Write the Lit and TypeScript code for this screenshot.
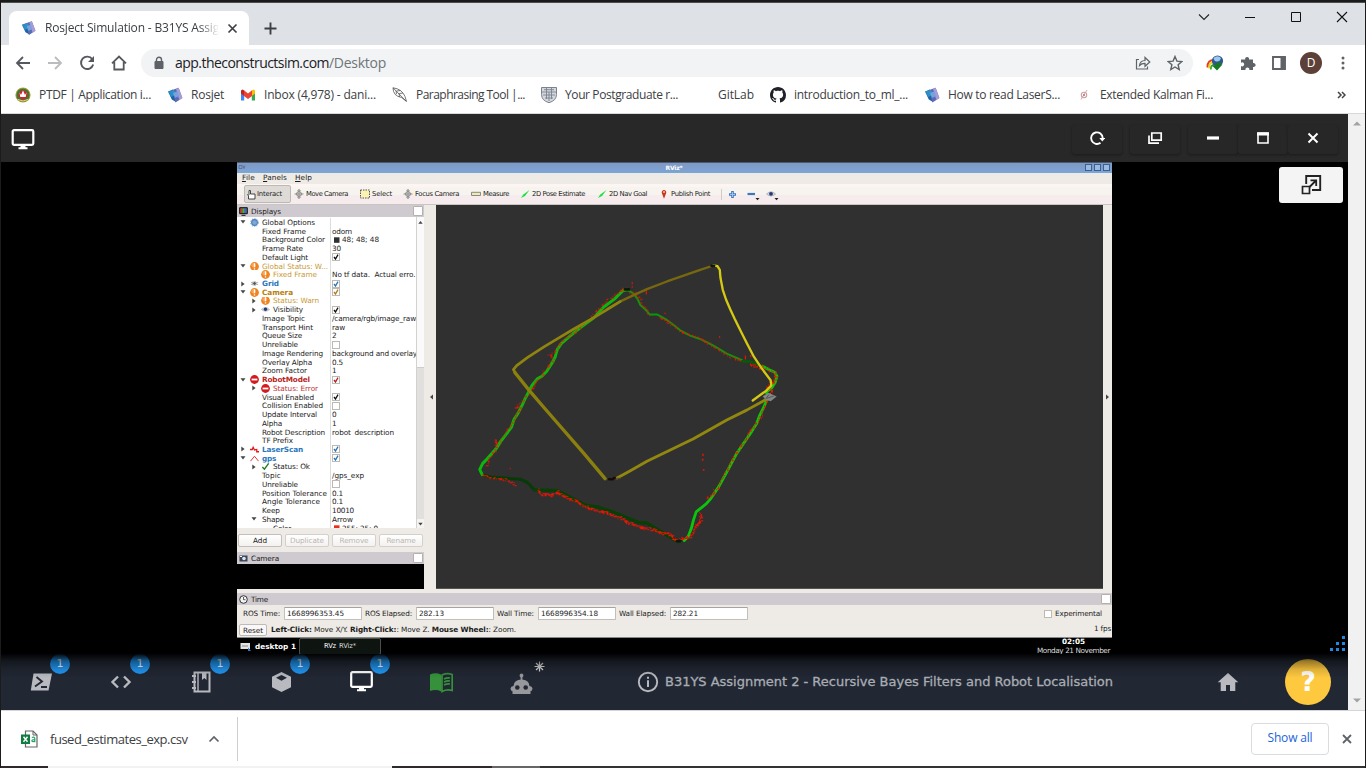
import { LitElement, html, svg, css, nothing } from "lit";
import { customElement } from "lit/decorators.js";

const icon = (w: number, h: number, body: unknown, vb = `0 0 ${w} ${h}`) =>
  html`<svg class="ic" width=${w} height=${h} viewBox=${vb} fill="none">${body}</svg>`;

// Label whose tracking is adjusted so that it spans w pixels.
const t = (text: string, w: number, cls = "") =>
  html`<span class="fit ${cls}" data-w=${w}>${text}</span>`;

const gem = svg`
  <path d="M1 4.5 6 2.6 9 15 4.8 12.6z" fill="#1b62a8"/>
  <path d="M5.2 3 11.6.8 15.4 11 8.4 15.4z" fill="#5b6bb5"/>
  <path d="M1.6 4.6 7 3 9 8 4 10z" fill="#2f9bd0" opacity=".8"/>
  <path d="M9 2 11.6.8 15.4 11 12.4 13z" fill="#a79bd8"/>
  <path d="M6 6 10.5 4.4 12 9.2 8 10.8z" fill="#77a3dd"/>`;

const monitor = svg`
  <path d="M2.5 1.2h18a1.3 1.3 0 0 1 1.3 1.3v12a1.3 1.3 0 0 1-1.3 1.3h-18a1.3 1.3 0 0 1-1.3-1.3v-12a1.3 1.3 0 0 1 1.3-1.3z" stroke="#fff" stroke-width="2.2"/>
  <path d="M9 16h5v2.2h2v2H7v-2h2z" fill="#fff"/>`;

const bookmarks: { text: string; w: number; art: unknown }[] = [
  { text: "PTDF | Application i...", w: 112, art: svg`<circle cx="8" cy="8" r="7.6" fill="#b79a32"/><circle cx="8" cy="8" r="6.6" fill="#3a7a3c"/><circle cx="8" cy="8" r="4.4" fill="#d8212b"/><path d="M4.500 5.500 6 8l2-4.500 2 4.500 1.500-2.500-.8 4.500H5.300z" fill="#fff"/><path d="M3 12.500q5 3 10 0" stroke="#e8d98a"/>` },
  { text: "Rosjet", w: 33, art: gem },
  { text: "Inbox (4,978) - dani...", w: 112, art: svg`<path d="M1 4v9.500h3.200V6z" fill="#4285f4"/><path d="M11.800 6v7.500H15V4z" fill="#34a853"/><path d="M11.800 3.500 13.500 2.500 15 3.500v3l-3.200 2.500z" fill="#fbbc04"/><path d="M1 3.500 2.500 2.500 4.200 3.500V9L1 6.500z" fill="#c5221f"/><path d="M4 3.300 8 6.600l4-3.300V9L8 12 4 9z" fill="#ea4335"/>` },
  { text: "Paraphrasing Tool |...", w: 109, art: svg`<path d="M1 .8Q10 2 13 9.500l1.500 5M1 .8Q1 9 9.500 10.500l5 4M1 .8 14 14M4 3.500 4.500 7M7 6l.5 4M7.500 6.500 11 6M5 4l3.500-.5" stroke="#555" stroke-width=".8"/>` },
  { text: "Your Postgraduate r...", w: 113, art: svg`<path d="M.5.500h15v7q0 6-7.500 8.200Q.500 13.500.500 7.500z" fill="#d4d7dc" stroke="#7b8290"/><path d="M1 5h14M3 2.700h10M5.500 1v11M10.500 1v11M2 8h12M4 11h8M8 5v9" stroke="#7b8290" stroke-width=".9"/>` },
  { text: "GitLab", w: 36, art: nothing },
  { text: "introduction_to_ml_...", w: 114, art: svg`<path fill="#1f2328" d="M8 0C3.580 0 0 3.580 0 8c0 3.540 2.290 6.530 5.470 7.590.4.070.55-.17.55-.38 0-.19-.01-.82-.01-1.490-2.010.37-2.530-.49-2.690-.94-.09-.23-.48-.94-.82-1.130-.28-.15-.68-.52-.01-.53.63-.01 1.080.58 1.230.82.72 1.210 1.870.87 2.330.66.07-.52.28-.87.51-1.070-1.780-.2-3.640-.89-3.640-3.950 0-.87.31-1.590.82-2.150-.08-.2-.36-1.020.08-2.120 0 0 .67-.21 2.200.82.64-.18 1.320-.27 2-.27s1.360.09 2 .27c1.530-1.040 2.200-.82 2.200-.82.44 1.100.16 1.920.08 2.120.51.56.82 1.270.82 2.150 0 3.070-1.870 3.750-3.650 3.950.29.25.54.73.54 1.480 0 1.070-.01 1.930-.01 2.200 0 .21.15.46.55.38A8.010 8.010 0 0 0 16 8c0-4.420-3.580-8-8-8z"/>` },
  { text: "How to read LaserS...", w: 112, art: gem },
  { text: "Extended Kalman Fi...", w: 113, art: svg`<path d="M5 12.500 11 3" stroke="#d88" stroke-width=".8"/><circle cx="8" cy="8" r="2.700" stroke="#c5a3a8" stroke-width="1.100"/><circle cx="8" cy="8" r="1" fill="#c66"/>` },
];

const orange = svg`<circle cx="5" cy="5" r="4.900" fill="#ee8420"/><circle cx="4" cy="3.500" r="2.500" fill="#f8a45a"/><path d="M5 1.500v4.300M5 7v1.300" stroke="#fff" stroke-width="1.500"/>`;
const stop = svg`<circle cx="5" cy="5" r="4.900" fill="#d41a1f"/><path d="M1.800 5h6.400" stroke="#fff" stroke-width="2"/>`;
const eye = svg`<path d="M.5 5Q5 .5 9.500 5 5 9 .5 5z" fill="#d5d8e2" stroke="#888" stroke-width=".5"/><circle cx="5" cy="4.800" r="1.900" fill="#243a78"/>`;
const gear = svg`<circle cx="5" cy="5" r="3.200" fill="#7fa6d4" stroke="#4a80bc" stroke-width="1.200" /><circle cx="5" cy="5" r="4.300" stroke="#6a97c9" stroke-dasharray="1.400 1.400" stroke-width="1"/>`;
const grid = svg`<path d="M1 4h8M1 6h8M3.500 2.500v5M6 2.500v5" stroke="#999" stroke-width=".8"/><path d="M3 5h4M5 3v4" stroke="#555"/>`;
const laser = svg`<path d="M0 5h2.500L3.500 2.500 5 5.500 7.500 5v2.500H10" stroke="#e01818" stroke-width="1.400"/>`;
const pathIcon = svg`<path d="M.5 8 5 2.500 9.500 8" stroke="#d22" stroke-width="1"/>`;
const okIcon = svg`<path d="M1.500 5.500 3.800 8 8.500 1.500" stroke="#1c7d22" stroke-width="1.500"/>`;

type Row = { d: number; n: string; w: number; a?: "v" | ">"; i?: unknown; c?: string; v?: string; vw?: number; k?: string; sw?: string };
// d: indent of the label, k: checkbox tick colour ("" = unticked)
const rows: Row[] = [
  { d: 0, a: "v", i: gear, n: "Global Options", w: 53 },
  { d: 0, n: "Fixed Frame", w: 44, v: "odom", vw: 20 },
  { d: 0, n: "Background Color", w: 63, v: "48; 48; 48", vw: 37, sw: "#303030" },
  { d: 0, n: "Frame Rate", w: 41, v: "30", vw: 9 },
  { d: 0, n: "Default Light", w: 46, k: "#111" },
  { d: 0, a: "v", i: orange, c: "warn", n: "Global Status: W...", w: 66 },
  { d: 1, i: orange, c: "warn", n: "Fixed Frame", w: 44, v: "No tf data.  Actual erro.", vw: 83.5 },
  { d: 0, a: ">", i: grid, c: "link", n: "Grid", w: 17, k: "#2a72b5" },
  { d: 0, a: "v", i: orange, c: "warnb", n: "Camera", w: 31, k: "#b07a12" },
  { d: 1, a: ">", i: orange, c: "warn", n: "Status: Warn", w: 46 },
  { d: 1, a: ">", i: eye, n: "Visibility", w: 30, k: "#111" },
  { d: 0, n: "Image Topic", w: 43, v: "/camera/rgb/image_raw", vw: 84 },
  { d: 0, n: "Transport Hint", w: 51, v: "raw", vw: 13 },
  { d: 0, n: "Queue Size", w: 40, v: "2", vw: 4.5 },
  { d: 0, n: "Unreliable", w: 36, k: "" },
  { d: 0, n: "Image Rendering", w: 61, v: "background and overlay", vw: 85 },
  { d: 0, n: "Overlay Alpha", w: 50, v: "0.5", vw: 11 },
  { d: 0, n: "Zoom Factor", w: 45, v: "1", vw: 4.5 },
  { d: 0, a: "v", i: stop, c: "err", n: "RobotModel", w: 48, k: "#b41d22" },
  { d: 1, a: ">", i: stop, c: "errn", n: "Status: Error", w: 45 },
  { d: 0, n: "Visual Enabled", w: 52, k: "#111" },
  { d: 0, n: "Collision Enabled", w: 61, k: "" },
  { d: 0, n: "Update Interval", w: 55, v: "0", vw: 4.5 },
  { d: 0, n: "Alpha", w: 20, v: "1", vw: 4.5 },
  { d: 0, n: "Robot Description", w: 63, v: "robot_description", vw: 62 },
  { d: 0, n: "TF Prefix", w: 31 },
  { d: 0, a: ">", i: laser, c: "link", n: "LaserScan", w: 41, k: "#2a72b5" },
  { d: 0, a: "v", i: pathIcon, c: "link", n: "gps", w: 14, k: "#2a72b5" },
  { d: 1, a: ">", i: okIcon, n: "Status: Ok", w: 37 },
  { d: 0, n: "Topic", w: 19, v: "/gps_exp", vw: 32 },
  { d: 0, n: "Unreliable", w: 36, k: "" },
  { d: 0, n: "Position Tolerance", w: 65, v: "0.1", vw: 11 },
  { d: 0, n: "Angle Tolerance", w: 58, v: "0.1", vw: 11 },
  { d: 0, n: "Keep", w: 18, v: "10010", vw: 22 },
  { d: 0, a: "v", n: "Shape", w: 22, v: "Arrow", vw: 21 },
  { d: 1, n: "Color", w: 18, v: "255; 25; 0", vw: 36, sw: "#e8301a" },
];

const cross = svg`<path d="M5 .5v9M.5 5h9M5 .5 3.500 2M5 .5 6.500 2M5 9.500 3.500 8M5 9.500 6.500 8" stroke="#8a8a86" stroke-width="1"/><circle cx="5" cy="5" r="2.400" stroke="#777" stroke-width=".9"/>`;
const arrow = svg`<path d="M1 9 3 5.800 9.500 1 5 7z" fill="#20e040"/>`;
const tools: { lead: number; art: unknown; n: string; w: number }[] = [
  { lead: 3, art: cross, n: "Move Camera", w: 42 },
  { lead: 12, art: svg`<path d="M.5 1h9v8h-9z" fill="#fbf3b4" stroke="#555" stroke-dasharray="1.500 1"/>`, n: "Select", w: 20 },
  { lead: 11, art: cross, n: "Focus Camera", w: 44 },
  { lead: 12, art: svg`<path d="M.5 3.300h9v3.200h-9z" fill="#f0ebb0" stroke="#888"/>`, n: "Measure", w: 26 },
  { lead: 11, art: arrow, n: "2D Pose Estimate", w: 53 },
  { lead: 12, art: arrow, n: "2D Nav Goal", w: 38 },
  { lead: 12, art: svg`<path d="M5 9.800 2.800 4a2.300 2.300 0 1 1 4.400 0z" fill="#c4391e"/><circle cx="5" cy="3" r="1" fill="#f4c0a8"/>`, n: "Publish Point", w: 39 },
];

type P = [number, number];
// Deterministic scatter of small squares along a polyline.
function scatter(pts: P[], seed: number, spread: number, step: number) {
  let s = seed * 7919;
  const rnd = () => ((s = (s * 16807) % 2147483647) / 2147483647);
  let d = "";
  for (let i = 1; i < pts.length; i++) {
    const [ax, ay] = pts[i - 1], [bx, by] = pts[i];
    const n = Math.max(1, Math.round(Math.hypot(bx - ax, by - ay) / step));
    for (let j = 0; j < n; j++) {
      const k = j / n;
      const x = Math.round((ax + (bx - ax) * k + (rnd() - 0.5) * spread) / 3) * 3;
      const y = Math.round((ay + (by - ay) * k + (rnd() - 0.5) * spread) / 3) * 3;
      d += `M${x} ${y}h${rnd() > 0.7 ? 6 : 3}v3H${x}z`;
    }
  }
  return d;
}
const red = [
  scatter([[72, 652], [84, 630], [104, 600], [104, 568], [108, 590], [126, 560], [150, 525], [178, 474], [162, 472], [185, 458], [205, 425], [240, 378], [280, 325], [264, 316], [284, 306], [298, 278], [350, 238], [400, 192], [440, 148], [490, 116]], 31, 7, 4.5),
  scatter([[480, 116], [500, 118], [514, 134], [524, 130], [548, 164], [552, 176], [572, 198]], 57, 9, 4),
  scatter([[596, 200], [640, 228], [660, 244], [690, 256], [724, 268], [760, 290], [800, 316], [845, 334]], 77, 6, 4),
  scatter([[866, 345], [900, 352], [924, 358], [942, 368], [944, 392], [922, 406], [920, 414], [932, 416], [926, 444]], 93, 10, 2.2),
  scatter([[922, 448], [905, 484], [895, 515], [875, 535], [860, 565], [830, 606], [800, 660], [770, 716], [742, 748]], 12, 7, 3.5),
  scatter([[720, 790], [720, 816], [704, 832], [692, 860], [664, 868], [650, 874], [630, 856], [600, 848], [574, 838], [545, 836], [520, 826], [500, 818], [470, 802], [440, 790], [410, 784], [385, 776], [350, 758], [316, 742], [290, 728], [270, 738], [240, 734], [232, 716]], 43, 8, 1.6),
  scatter([[64, 676], [100, 686], [140, 692], [154, 700], [166, 714]], 8, 7, 3.2),
].join("");

const scene = svg`
  <g transform="translate(460 250) scale(.33333)" stroke-linecap="round" stroke-linejoin="round">
    <path d="M62 676 90 683 150 688 180 690 200 699 222 722" stroke="#063a06" stroke-width="9"/>
    <path d="M222 722 290 724 375 768 410 773 460 789 535 820 560 822 590 840 640 870 655 877" stroke="#083f06" stroke-width="10"/>
    <path d="M64 676 57 660 66 642 78 630 108 596 120 576 134 558 152 534 160 510 172 492 186 464 194 446 205 426 214 408 230 388 244 380 258 366 276 338 284 322 290 300 302 282 330 258 362 232 400 204 430 172 462 148 488 122 500 120" stroke="#0db60d" stroke-width="9"/>
    <path d="M500 120 518 130 532 148 540 166 556 180 568 194 590 194 616 208 640 226 660 242 690 258 724 270 760 288 800 312 846 332" stroke="#0a970a" stroke-width="6"/>
    <path d="M846 335 870 336 912 352" stroke="#075a09" stroke-width="8"/>
    <path d="M908 350 926 360 944 368 951 380 946 398 936 414 918 428 926 440 908 480 898 500 890 522 870 554 830 612 800 668 776 712 752 748 738 764 708 788 700 812 694 836 684 862 672 874" stroke="#0cc40c" stroke-width="8.500"/>
    <path d=${red} fill="#ee1500"/>
    <path d="M726 613h5v6h-5zM725 628h5v6h-5zM728 659h5v5h-5zM777 259h3v6h-3zM612 189h5v3h-5zM556 122h4v12h-4zM147 655h3v5h-3zM514 96h3v8h-3zM514 108h3v6h-3zM854 318h4v12h-4zM870 316h4v6h-4zM740 742h5v8h-5z" fill="#e01400"/>
    <path d="M760 47 720 60 620 95 560 118 520 136 480 155 440 178" stroke="#77680f" stroke-width="7"/>
    <path d="M480 155 440 180 400 204 340 238 290 268 250 292 200 324 168 348 158 360 168 376" stroke="#8f840f" stroke-width="8"/>
    <path d="M162 368 207 424 250 474 290 520 370 612 434 688" stroke="#8b800e" stroke-width="10"/>
    <path d="M470 686 510 664 560 636 630 602 700 568 800 512 860 482 918 450" stroke="#93880f" stroke-width="8.500"/>
    <path d="M760 47 772 49 779 60 781 84 788 120 798 150 810 178 824 208 840 240 860 280 882 322 904 355 932 392 934 408 918 424 878 453" stroke="#d5c914" stroke-width="7"/>
    <path d="M446 690h12M460 686h3" stroke="#160c08" stroke-width="7"/>
    <path d="M468 687h12" stroke="#5b4030" stroke-width="3"/>
    <path d="M494 119h12M650 876h10M754 48h8" stroke="#0c1a0a" stroke-width="8"/>
    <path d="M908 440 926 430 950 441 932 455 916 450z" fill="#858585"/>
    <path d="M922 446 940 440M926 436 918 448" stroke="#4f5a4f" stroke-width="3"/>
  </g>`;

const navIcons = [
  svg`<path d="M3.500 3.500H22L18.500 20.500H0.800z" fill="#b8babf"/><path d="m6.500 7 5.500 4.500-7 5M11 17h6" stroke="#212733" stroke-width="1.900"/>`,
  svg`<path d="M8 6.500 2.500 12 8 17.500M14 6.500 19.500 12 14 17.500" stroke="#b8babf" stroke-width="2.400"/>`,
  svg`<path d="M4.500 2.500h15v19h-15z" stroke="#b8babf" stroke-width="2" /><path d="M2 6h4M2 12h4M2 18h4" stroke="#b8babf" stroke-width="2.200"/><path d="M8 2.500v19" stroke="#b8babf" stroke-width="1.400"/><path d="M12 3h4.500v7l-2.200-2-2.300 2z" fill="#b8babf"/>`,
  svg`<path d="m11.500 2 9.500 4.800v10.400L11.500 22 2 17.200V6.800z" fill="#b8babf"/><path d="m11.500 5 5.500 2.800-5.500 3L6 7.800z" fill="#212733"/>`,
  svg`<g transform="translate(0 1)">${monitor}</g>`,
  svg`<path d="M0 4.500Q6 2 11.300 4.800V21.500Q6 19 0 21z" fill="#35913a"/><path d="M12 5Q17 2.500 22.200 4.500V20.500Q17 19 12 21.500zM14 9q3-1.500 6-1M14 12q3-1.500 6-1M14 15q3-1.500 6-1" stroke="#35913a" stroke-width="1.700"/>`,
  svg`<circle cx="11.500" cy="5.500" r="1.900" fill="#97989c"/><path d="M11.500 5v6" stroke="#97989c" stroke-width="1.800"/><path d="M3.500 16Q4 9.500 11.500 9.500T19.500 16q2.700 0 3 2.500-.2 2.500-2 2.700V24h-18v-2.800Q.700 21 .500 18.500.800 16 3.500 16z" fill="#97989c"/><circle cx="7.300" cy="17.500" r="2.300" fill="#212733"/><circle cx="15.700" cy="17.500" r="2.300" fill="#212733"/>`,
];

@customElement("app-root")
export class AppRoot extends LitElement {
  static styles = css`
    * { box-sizing: border-box; }
    :host { display: block; width: 1366px; height: 768px; overflow: hidden; font: 12px/16px "Open Sans", "Noto Sans", sans-serif; color: #3c4043; }
    .win { width: 1366px; height: 768px; background: #1b1b1b; padding: 2px 1px 0 1px; display: flex; flex-direction: column; border-top: 0; }
    .ic { display: block; flex: none; }
    .fit { display: inline-block; white-space: pre; flex: none; }
    .grow { flex: 1; }

    .tabs { height: 43px; flex: none; background: #dee1e6; border-top: 1px solid #4c4e50; display: flex; align-items: flex-start; }
    .tab { margin: 8px 0 0 8px; height: 34px; width: 240px; background: #fff; border-radius: 8px 8px 0 0; display: flex; align-items: center; padding: 0 0 0 12px; gap: 8px; }
    .tab .title { width: 174px; margin-left: 1px; overflow: hidden; display: flex; -webkit-mask-image: linear-gradient(90deg, #000 154px, transparent 174px); mask-image: linear-gradient(90deg, #000 154px, transparent 174px); }
    .plus { margin: 19px 0 0 15px; }
    .caps { display: flex; margin: 8px 16px 0 0; gap: 32px; }

    .bar { height: 36px; flex: none; background: #fff; display: flex; align-items: center; }
    .nav { display: flex; gap: 16px; margin-left: 14px; }
    .omni { margin-left: 14px; width: 1052px; height: 28px; border-radius: 14px; background: #f1f3f4; display: flex; align-items: center; padding: 0 10px 0 13px; font-size: 14px; }
    .omni .url { margin-left: 11px; color: #202124; display: flex; }
    .omni .path { color: #70757a; }
    .ext { display: flex; align-items: center; margin-left: 13px; }
    .avatar { width: 22px; height: 22px; border-radius: 50%; background: #5d4037; color: #fff; text-align: center; line-height: 22px; margin: 0 19px 0 14px; }
    .marks { height: 33px; flex: none; background: #fff; border-bottom: 1px solid #d6d8da; display: flex; align-items: center; padding: 0 19px 4px 14px; gap: 16px; }
    .mark { display: flex; gap: 8px; align-items: center; }

    .content { height: 596px; flex: none; display: flex; background: #000; }
    .page { width: 1347px; display: flex; flex-direction: column; }
    .scroll { width: 17px; background: #f1f1f1; display: flex; flex-direction: column; justify-content: space-between; align-items: center; padding: 7px 0 7px; }
    .head { height: 48px; flex: none; background: #282828; display: flex; align-items: center; padding: 2px 10px 0 10px; }
    .hb { width: 50px; height: 29px; border-radius: 3px; background: #272727; box-shadow: 0 1px 3px rgba(0,0,0,.35); display: flex; align-items: center; justify-content: center; padding-bottom: 2px; }
    .hb.sp { margin-right: 8px; }
    .desk { height: 492px; flex: none; display: flex; background: #000; padding-left: 236px; }
    .side { flex: 1; display: flex; flex-direction: column; justify-content: space-between; align-items: flex-end; padding: 5px 2px 2px 0; }
    .pop { width: 64px; height: 36px; border-radius: 3px; background: #f4f4f4; display: flex; align-items: center; justify-content: center; margin-right: 3px; }

    .rviz { width: 875px; height: 492px; display: flex; flex-direction: column; background: #eeebe6; font: 7.3px/9px "DejaVu Sans", sans-serif; color: #1c1c1c; }
    .tt { height: 10.500px; flex: none; border-top: 1px solid #4a5a70; background: linear-gradient(#8098c4, #7ba6d6); display: flex; align-items: center; color: #fff; font-weight: bold; }
    .tt .name { margin: 0 auto; padding-left: 16px; font-size: 6px; line-height: 8px; display: flex; }
    .tb { display: flex; gap: 2px; padding-right: 2px; }
    .tb i { width: 7px; height: 7px; border: 1px solid #3c5f96; background: #9db9de; }
    .menu { height: 11.500px; flex: none; display: flex; gap: 8px; padding: 0 5px 2px; align-items: center; }
    u { text-decoration: underline; }
    .tools { height: 21px; flex: none; background: linear-gradient(#fcf5f4 0 15%, #f7f4ef 15% 55%, #f6ecee 55%); border-bottom: 1px solid #c9c6c2; display: flex; align-items: center; padding-left: 3px; font-size: 6.800px; }
    .act { margin-left: 4px; width: 47px; height: 18px; background: #dedbd7; border: 1px solid #bcb9b5; border-radius: 2px; display: flex; align-items: center; gap: 1px; padding-left: 1px; }
    .tool { display: flex; gap: 2px; align-items: center; }
    .vsep { width: 1px; height: 11px; background: #cfccc8; margin: 0 6px 0 11px; }
    .mid { height: 384px; flex: none; display: flex; }
    .left { width: 187px; display: flex; flex-direction: column; }
    .dt { height: 12px; flex: none; background: #cecacf; display: flex; align-items: center; padding: 0 1px 0 2px; gap: 3px; }
    .dt .box { width: 10px; height: 10px; background: #fff; border: 1px solid #b5b0b0; border-radius: 1px; }
    .tree { height: 311px; flex: none; background: #fff; display: flex; }
    .list { width: 179px; height: 311px; padding-top: 1px; overflow: hidden; display: flex; flex-direction: column; }
    .r { height: 8.745px; flex: none; display: flex; }
    .r .l { width: 94px; flex: none; border-right: 1px solid #dcdcdc; display: flex; align-items: center; overflow: hidden; }
    .r .v { flex: 1; overflow: hidden; padding-left: 1px; display: flex; align-items: center; }
    .ar { width: 11px; flex: none; display: flex; justify-content: center; }
    .in { width: 11px; flex: none; }
    .ici { width: 14px; flex: none; display: flex; justify-content: center; padding-right: 2px; }
    .warn { color: #c99a38; } .warnb { color: #b9800f; font-weight: bold; }
    .link { color: #2a78bd; font-weight: bold; } .err { color: #b91f24; font-weight: bold; } .errn { color: #c2353a; }
    .ck { width: 8px; height: 8px; border: 1px solid #bdb9b5; background: #fff; display: flex; align-items: center; justify-content: center; }
    .vs { width: 8px; height: 311px; background: #e2e0de; display: flex; flex-direction: column; justify-content: space-between; border-left: 1px solid #d4d1ce; }
    .vs .kn { height: 151px; background: #fafafa; border-bottom: 1px solid #ccc; display: flex; justify-content: center; padding-top: 3px; }
    .vs .dn { height: 9px; background: #f5f4f2; display: flex; justify-content: center; align-items: center; }
    .btns { height: 24px; flex: none; display: flex; gap: 3px; align-items: center; padding-left: 1px; }
    .b { width: 44px; height: 13px; border: 1px solid #c4bfba; border-radius: 2px; background: linear-gradient(#fff, #f4f1f0); display: flex; align-items: center; justify-content: center; }
    .b.off { color: #b9b6b2; border-color: #d4d0cc; }
    .cv { flex: 1; background: #000; }
    .split { width: 12px; display: flex; align-items: center; justify-content: center; padding-left: 2px; }
    .split.r2 { width: 9px; padding-left: 0; }
    .view { width: 667px; background: #303030; border-bottom: 1px solid #555; }
    .dt.time { margin-top: 4px; height: 12px; }
    .tm { height: 18px; flex: none; display: flex; align-items: center; padding: 0 10px 1px 6px; }
    .f { width: 78px; height: 12.500px; background: #fff; border: 1px solid #c2beba; border-top-color: #a8a4a0; border-radius: 1px; padding-left: 2px; display: flex; align-items: center; margin: 0 3px 0 4px; }
    .st { height: 14px; flex: none; display: flex; align-items: center; padding: 0 1px 1px 2px; }
    .rs { width: 28px; height: 12px; border: 1px solid #bbb; border-radius: 2px; background: #faf7f6; display: flex; align-items: center; justify-content: center; margin-right: 4px; margin-top: 1px; }
    .fps { padding-bottom: 3px; }
    .task { flex: 1; border-top: 1px solid #888; background: #000; color: #ddd; display: flex; align-items: center; padding-left: 3px; }
    .task b { color: #fff; }
    .app { width: 82px; height: 17px; border: 1px solid #4a4f4a; border-radius: 2px; background: #0e1410; display: flex; align-items: center; justify-content: center; gap: 3px; margin-left: 3px; font-size: 6.800px; }
    .app b { font-weight: normal; }
    .clock { margin-left: auto; padding-right: 2px; display: flex; flex-direction: column; align-items: center; line-height: 8.500px; }

    .dock { flex: 1; position: relative; background: #212733; display: flex; align-items: center; }
    .shade { position: absolute; left: 0; right: 0; top: 0; height: 24px; background: linear-gradient(rgba(0,0,0,.92), rgba(0,0,0,.4) 30%, rgba(0,0,0,.12) 65%, transparent); pointer-events: none; }
    .cell { width: 80px; height: 56px; display: flex; align-items: center; justify-content: center; position: relative; }
    .bd { position: absolute; left: 49px; top: 0; width: 20px; height: 20px; border-radius: 50%; background: #2196f3; color: #fff; font: 11px/20px "DejaVu Sans", sans-serif; text-align: center; }
    .star { position: absolute; left: 53px; top: 7px; }
    .info { margin-left: 76px; display: flex; align-items: center; gap: 6px; color: #a9adb3; font: 13px/20px "DejaVu Sans", sans-serif; -webkit-text-stroke: .3px #a9adb3; }
    .home { margin-left: 104px; }
    .help { margin-left: 46px; width: 46px; height: 46px; border-radius: 50%; background: #ffc93f; display: flex; align-items: center; justify-content: center; color: #fff; font: bold 27px/46px "DejaVu Sans", sans-serif; }

    .dl { height: 56px; flex: none; background: #fff; border-top: 1px solid #d3d5d8; display: flex; align-items: center; padding: 0 13px 0 20px; font-size: 13px; }
    .dl .ds { width: 1px; height: 44px; background: #ccced1; margin-left: 17px; }
    .show { width: 78px; height: 32px; border: 1px solid #dadce0; border-radius: 4px; color: #1a66d8; display: flex; align-items: center; justify-content: center; margin-right: 13px; font-size: 12px; padding-bottom: 1px; }
    .edge { height: 2px; flex: none; background: linear-gradient(90deg, #2d292c 47px, #f2f2f2 47px 391px, #2d292c 391px 491px, #666 491px 539px, #343235 539px); }
  `;

  // Spread each label over its measured width once the text has been laid out.
  firstUpdated() {
    const items = Array.from(this.renderRoot.querySelectorAll<HTMLElement>(".fit"));
    const sizes = items.map((e) => e.getBoundingClientRect().width);
    items.forEach((e, i) => {
      const w = Number(e.dataset.w);
      const n = e.textContent!.length;
      e.style.letterSpacing = `${((w - sizes[i]) / n).toFixed(3)}px`;
    });
  }

  private treeRow(r: Row) {
    const arrowIcon = r.a === "v"
      ? icon(6, 6, svg`<path d="M.5 1.300h5L3 4.600z" fill="#444"/>`)
      : r.a === ">" ? icon(6, 6, svg`<path d="M1.300.5v5L4.600 3z" fill="#444"/>`) : nothing;
    const inShape = r.a === "v" && !r.i;
    return html`<div class="r">
      <div class="l">
        ${r.d ? html`<span class="in"></span>` : nothing}
        <span class="ar">${inShape ? nothing : arrowIcon}</span>
        ${inShape ? html`<span class="ici">${arrowIcon}</span>` : html`<span class="ici">${r.i ? icon(9, 9, r.i, "0 0 10 10") : nothing}</span>`}
        ${t(r.n, r.w, r.c ?? "")}
      </div>
      <div class="v">
        ${r.k !== undefined ? html`<span class="ck">${r.k ? icon(6, 6, svg`<path d="M1 3 2.500 5 5 .6" stroke=${r.k} stroke-width="1.300"/>`) : nothing}</span>` : nothing}
        ${r.sw ? icon(10, 6, svg`<path d="M2 .3h5.500v5.500H2z" fill=${r.sw}/>`) : nothing}
        ${r.v ? t(r.v, r.vw!) : nothing}
      </div>
    </div>`;
  }

  private rviz() {
    const box = html`<span class="box"></span>`;
    return html`<div class="rviz">
      <div class="tt">${icon(10, 7, svg`<path d="M2 1.500h3v3H2zM6 1.500l1 3 1-3" stroke="#5a6a88" stroke-width=".8"/>`)}<span class="name">${t("RViz*", 17)}</span><span class="tb"><i></i><i></i><i></i></span></div>
      <div class="menu">
        <span class="fit" data-w="13"><u>F</u>ile</span><span class="fit" data-w="24"><u>P</u>anels</span><span class="fit" data-w="17"><u>H</u>elp</span>
      </div>
      <div class="tools">
        <div class="act">${icon(10, 11, svg`<path d="M2.500 10V6.500L1 5.500M3 6V1.500h1.500V5h4.500v5H2.500" fill="#fff" stroke="#333" stroke-width=".9"/>`)}${t("Interact", 25)}</div>
        ${tools.map((x) => html`<span style="width:${x.lead}px"></span><div class="tool">${icon(10, 10, x.art)}${t(x.n, x.w)}</div>`)}
        <span class="vsep"></span>
        ${icon(9, 9, svg`<path d="M4.500 1v7M1 4.500h7" stroke="#3c78bd" stroke-width="2.600"/><path d="M4.500 2v5M2 4.500h5" stroke="#9cc3ee" stroke-width="1"/>`)}
        <span style="width:10px"></span>
        ${icon(13, 14, svg`<path d="M.5 7h7.500" stroke="#3c78bd" stroke-width="2.200"/><path d="M8.500 11h4l-2 2.300z" fill="#222"/>`)}
        <span style="width:6px"></span>
        ${icon(13, 14, svg`<g transform="translate(0 2)">${eye}</g><path d="M8.500 11h4l-2 2.300z" fill="#222"/>`)}
      </div>
      <div class="mid">
        <div class="left">
          <div class="dt">${icon(9, 9, svg`<path d="M.7.700h7.600v6H.7z" fill="#555" stroke="#111"/><path d="M1.500 1.500h2v4.500h-2z" fill="#d33"/><path d="M3.500 1.500h2v4.500h-2z" fill="#3b3"/><path d="M5.500 1.500h2v4.500h-2z" fill="#46c"/><path d="M2.500 8.300h4" stroke="#111"/>`)}${t("Displays", 30)}<span class="grow"></span>${box}</div>
          <div class="tree">
            <div class="list">${rows.map((r) => this.treeRow(r))}</div>
            <div class="vs"><div class="kn">${icon(5, 5, svg`<path d="M.3 3.800h4.400L2.500 1z" fill="#444"/>`)}</div><div class="dn">${icon(5, 4, svg`<path d="M.3.800h4.400L2.500 3.600z" fill="#444"/>`)}</div></div>
          </div>
          <div class="btns"><div class="b">${t("Add", 14)}</div><div class="b off">${t("Duplicate", 34)}</div><div class="b off">${t("Remove", 29)}</div><div class="b off">${t("Rename", 29)}</div></div>
          <div class="dt">${icon(9, 9, svg`<path d="M.5 1.500h8v6h-8z" fill="#3a4658"/><circle cx="5" cy="4.500" r="1.800" fill="#dbe4ef"/><path d="M1 2.500h2" stroke="#fff"/>`)}${t("Camera", 28)}<span class="grow"></span>${box}</div>
          <div class="cv"></div>
        </div>
        <div class="split">${icon(5, 6, svg`<path d="M4 .5v5L1 3z" fill="#444"/>`)}</div>
        <svg class="ic view" width="667" height="384" viewBox="436 205 667 384" fill="none">${scene}</svg>
        <div class="split r2">${icon(5, 6, svg`<path d="M1 .5v5L4 3z" fill="#444"/>`)}</div>
      </div>
      <div class="dt time">${icon(9, 9, svg`<circle cx="4.500" cy="4.500" r="3.800" fill="#f4f4f4" stroke="#333"/><path d="M4.500 2v2.700h2" stroke="#333" stroke-width=".8"/>`)}${t("Time", 17)}<span class="grow"></span>${box}</div>
      <div class="tm">
        ${t("ROS Time:", 37)}<div class="f">${t("1668996353.45", 57)}</div>
        ${t("ROS Elapsed:", 47)}<div class="f">${t("282.13", 25)}</div>
        ${t("Wall Time:", 37)}<div class="f">${t("1668996354.18", 57)}</div>
        ${t("Wall Elapsed:", 47)}<div class="f">${t("282.21", 25)}</div>
        <span class="grow"></span><span class="ck"></span><span style="width:3px"></span>${t("Experimental", 47)}
      </div>
      <div class="st"><div class="rs">${t("Reset", 20)}</div><span class="fit" data-w="245"><b>Left-Click:</b> Move X/Y. <b>Right-Click:</b>: Move Z. <b>Mouse Wheel:</b>: Zoom.</span><span class="grow"></span><span class="fps">${t("1 fps", 17)}</span></div>
      <div class="task">
        ${icon(11, 10, svg`<path d="M.5 1h9.500v6H.5z" fill="#e4e4e4"/><path d="M2 4h6" stroke="#888"/><path d="M8 5.500 11 9H8z" fill="#3a78c8"/>`)}
        <span style="width:4px"></span><b>${t("desktop 1", 41)}</b>
        <div class="app"><b>${t("RVz", 12)}</b>${t("RViz*", 17)}</div>
        <div class="clock"><b>${t("02:05", 23)}</b>${t("Monday 21 November", 73)}</div>
      </div>
    </div>`;
  }

  render() {
    return html`<div class="win">
      <div class="tabs">
        <div class="tab">${icon(15, 16, gem, "0 0 16 16")}<div class="title">${t("Rosject Simulation - B31YS Assig", 174)}</div>
          ${icon(11, 11, svg`<path d="m1.500 1.500 8 8m0-8-8 8" stroke="#3c4043" stroke-width="1.700"/>`)}</div>
        <div class="plus">${icon(13, 13, svg`<path d="M6.500.500v12M.5 6.500h12" stroke="#3c4043" stroke-width="1.900"/>`)}</div>
        <span class="grow"></span>
        <div class="caps">
          ${icon(14, 12, svg`<path d="m2 3.500 5 5 5-5" stroke="#222" stroke-width="1.100"/>`)}
          ${icon(14, 12, svg`<path d="M2 6.500h10" stroke="#111"/>`)}
          ${icon(14, 12, svg`<path d="M2.500 1.500h9v9h-9z" stroke="#111"/>`)}
          ${icon(14, 12, svg`<path d="m2 1 10 10M12 1 2 11" stroke="#111" stroke-width="1.100"/>`)}
        </div>
      </div>
      <div class="bar">
        <div class="nav">
          ${icon(16, 16, svg`<path d="M15 8H2.500M8 2 2 8l6 6" stroke="#55595e" stroke-width="1.800"/>`)}
          ${icon(16, 16, svg`<path d="M1 8h12.500M8 2l6 6-6 6" stroke="#babcbe" stroke-width="1.800"/>`)}
          ${icon(16, 16, svg`<path d="M13.300 4.200A6.200 6.200 0 1 0 14.200 9.500" stroke="#55595e" stroke-width="1.900"/><path d="M15 1v6H9z" fill="#55595e"/>`)}
          ${icon(16, 16, svg`<path d="M1 8.300 8 1.500l7 6.800M3.300 7v7.500h9.400V7" stroke="#55595e" stroke-width="1.800"/>`)}
        </div>
        <div class="omni">
          ${icon(10, 14, svg`<path d="M1 5.500h8v7H1z" fill="#5f6368" stroke="#5f6368" stroke-linejoin="round"/><path d="M2.500 6V3.700a2.500 2.500 0 0 1 5 0V6" stroke="#5f6368" stroke-width="1.400"/>`)}
          <div class="url">${t("app.theconstructsim.com", 154)}${t("/Desktop", 57, "path")}</div>
          <span class="grow"></span>
          ${icon(16, 16, svg`<path d="M4 4.500H1.500V14h11v-2.500" stroke="#5f6368" stroke-width="1.200"/><path d="M4.500 10.500Q5 5.700 10 5.500V2.500L14.800 7 10 11.300V8.300Q6.500 8.200 4.500 10.500z" stroke="#5f6368" stroke-width="1.200"/>`)}
          <span style="width:16px"></span>
          ${icon(16, 16, svg`<path d="m8 1.500 1.900 4.600 4.900.4-3.700 3.200 1.100 4.800L8 12l-4.200 2.500 1.100-4.800L1.200 6.500l4.900-.4z" stroke="#5f6368" stroke-width="1.400"/>`)}
        </div>
        <div class="ext">
          ${icon(18, 18, svg`<path d="M1.500 13.500Q1 5.500 9 6" stroke="#e33b22" stroke-width="2"/><path d="M3.500 14.500Q2 8 9 8" stroke="#f2cf1d" stroke-width="2"/><path d="M5 15.500q-1-5 5-5" stroke="#35b030" stroke-width="1.800"/><circle cx="11.500" cy="7" r="5.600" fill="#31588f"/><path d="M7.500 4q4-3.500 7.500 0-1 3.500-4 3.500-2.500.5-3.500-3.500z" fill="#9cc8ee"/><path d="M11.500 8.500h4l-1 2h2l-5.500 6-5-5h3z" fill="#177a22"/>`)}
          <span style="width:16px"></span>
          ${icon(16, 16, svg`<path d="M1 4.500h4.200a2 2 0 1 1 3.800 0h4v3.600a2 2 0 1 1 0 3.800V15H9.300a2 2 0 1 0-3.800 0H1v-4a2 2 0 1 0 0-3.200z" fill="#5f6368"/>`)}
          <span style="width:16px"></span>
          ${icon(14, 14, svg`<path d="M1 1h12v12H1z" stroke="#5f6368" stroke-width="1.900"/><path d="M8.500 1H13v12H8.500z" fill="#5f6368"/>`)}
          <div class="avatar">D</div>
          ${icon(4, 14, svg`<circle cx="2" cy="2" r="1.500" fill="#5f6368"/><circle cx="2" cy="7" r="1.500" fill="#5f6368"/><circle cx="2" cy="12" r="1.500" fill="#5f6368"/>`)}
        </div>
      </div>
      <div class="marks">
        ${bookmarks.map((b) => html`<div class="mark">${icon(16, 16, b.art)}${t(b.text, b.w)}</div>`)}
        <span class="grow"></span>
        ${icon(9, 8, svg`<path d="m1 1 3 3-3 3M5 1l3 3-3 3" stroke="#444" stroke-width="1.500"/>`)}
      </div>
      <div class="content">
        <div class="page">
          <div class="head">
            ${icon(24, 21, monitor, "0 0 23 21")}
            <span class="grow"></span>
            <div class="hb sp">${icon(16, 16, svg`<path d="M11.500 12.700A5.800 5.800 0 1 1 13.700 8" stroke="#fff" stroke-width="1.900"/><path d="M10.300 8h6l-3 3.500z" fill="#fff"/>`)}</div>
            <div class="hb sp">${icon(16, 16, svg`<path d="M4.800 3h9.400v7.200H4.800z" stroke="#fff" stroke-width="1.700"/><path d="M2 5.500v7.700h10" stroke="#fff" stroke-width="1.700"/>`)}</div>
            <div class="hb">${icon(12, 12, svg`<path d="M0 6h12" stroke="#fff" stroke-width="3.200"/>`)}</div>
            <div class="hb">${icon(12, 12, svg`<path d="M1 1h10v10H1z" stroke="#fff" stroke-width="1.600"/><path d="M0 2h12" stroke="#fff" stroke-width="3"/>`)}</div>
            <div class="hb">${icon(12, 12, svg`<path d="m1.500 1.500 9 9m0-9-9 9" stroke="#fff" stroke-width="2"/>`)}</div>
          </div>
          <div class="desk">
            ${this.rviz()}
            <div class="side">
              <div class="pop">${icon(22, 22, svg`<path d="M6.200 10V2h14v14H12" stroke="#222" stroke-width="1.900"/><path d="M2.500 12.500h7v7h-7z" stroke="#222" stroke-width="1.700"/><path d="M9.500 13 15.500 7M10.500 6.300h5.700V12" stroke="#222" stroke-width="1.800"/>`)}</div>
              ${icon(17, 17, svg`<path d="M13 1h3v3h-3zM13 7h3v3h-3zM7 7h3v3H7zM13 13h3v3h-3zM7 13h3v3H7zM1 13h3v3H1z" fill="#1e88e5"/>`)}
            </div>
          </div>
          <div class="dock">
            ${navIcons.map((n, i) => html`<div class="cell">${icon(23, 24, n)}
              ${i < 5 ? html`<span class="bd">1</span>` : nothing}
              ${i === 6 ? html`<span class="star">${icon(11, 11, svg`<path d="M5.500.500v10M.5 5.500h10M2 2l7 7M9 2 2 9" stroke="#ddd" stroke-width="1.200"/>`)}</span>` : nothing}
            </div>`)}
            <div class="info">${icon(22, 22, svg`<circle cx="11" cy="11" r="9.200" stroke="#b8babf" stroke-width="1.900"/><path d="M11 9.200v6.800M11 5.800v2" stroke="#b8babf" stroke-width="2"/>`)}${t("B31YS Assignment 2 - Recursive Bayes Filters and Robot Localisation", 448)}</div>
            <div class="home">${icon(22, 20, svg`<path d="M11 1 .7 10.300H3.700V19h5.300v-6h4v6h5.300v-8.700h3z" fill="#b8babf"/>`)}</div>
            <div class="help">?</div>
            <div class="shade"></div>
          </div>
        </div>
        <div class="scroll">${icon(8, 5, svg`<path d="M0 4.500h8L4 .5z" fill="#a3a3a3"/>`)}${icon(8, 5, svg`<path d="M0 .5h8L4 4.500z" fill="#a3a3a3"/>`)}</div>
      </div>
      <div class="dl">
        ${icon(17, 18, svg`<path d="M4.500 1h7.500l4 4v12H4.500z" fill="#fff" stroke="#666" stroke-width="1.200"/><path d="M12 1v4h4" stroke="#666"/><path d="M0 4.500h9v9.500H0z" fill="#107c41"/><path d="m2.500 6.700 4 5m0-5-4 5" stroke="#fff" stroke-width="1.400"/><path d="M10.800 7.500q3-1 3 1.200v3.500M13.800 9.500q-3 0-3 1.400 1 1.600 3 0" stroke="#21a366" stroke-width="1.200"/>`)}
        <span style="width:12px"></span>${t("fused_estimates_exp.csv", 137.5)}
        <span style="width:20px"></span>
        ${icon(12, 10, svg`<path d="m1.500 7.500 4.500-4.500 4.500 4.500" stroke="#5f6368" stroke-width="1.700"/>`)}
        <span class="ds"></span>
        <span class="grow"></span>
        <div class="show">${t("Show all", 45)}</div>
        ${icon(10, 10, svg`<path d="m1 1 8 8m0-8-8 8" stroke="#5f6368" stroke-width="1.800"/>`)}
      </div>
      <div class="edge"></div>
    </div>`;
  }
}
